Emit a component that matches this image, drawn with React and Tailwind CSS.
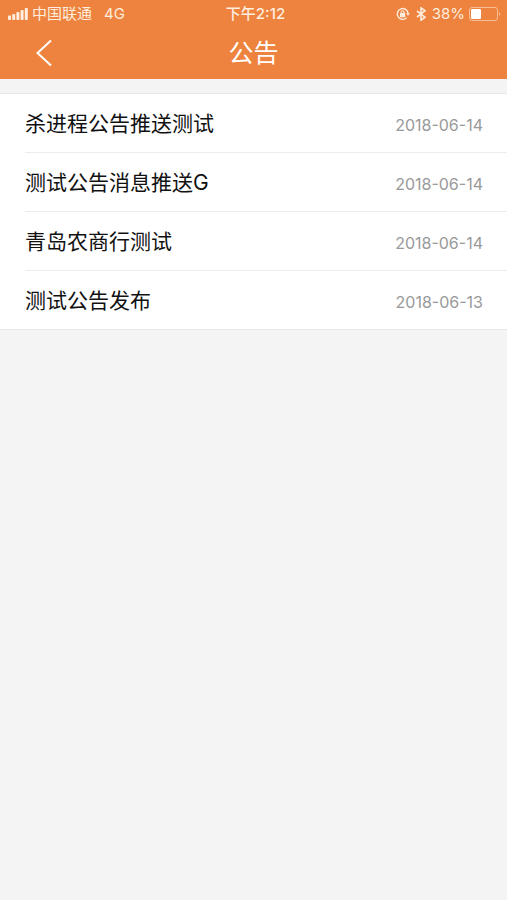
import React from "react";

const notices = [
  { id: 1, title: "杀进程公告推送测试", date: "2018-06-14" },
  { id: 2, title: "测试公告消息推送G", date: "2018-06-14" },
  { id: 3, title: "青岛农商行测试", date: "2018-06-14" },
  { id: 4, title: "测试公告发布", date: "2018-06-13" },
];

const SignalIcon = () => (
  <svg className="w-5 h-3" viewBox="0 0 20 12" fill="currentColor" aria-hidden="true">
    <rect x="0" y="7.5" width="3" height="4.5" rx="0.8" />
    <rect x="4.2" y="6" width="3" height="6" rx="0.8" />
    <rect x="8.4" y="4" width="3" height="8" rx="0.8" />
    <rect x="12.6" y="2" width="3" height="10" rx="0.8" />
    <rect x="16.8" y="0" width="3" height="12" rx="0.8" />
  </svg>
);

const RotationLockIcon = () => (
  <svg className="w-[14px] h-[14px]" viewBox="0 0 14 14" fill="none" aria-hidden="true">
    <path d="M10.7 10.6A5.4 5.4 0 1 1 12.1 6.4" stroke="currentColor" strokeWidth="1.4" />
    <path d="M10 6.2h4l-2 2.6z" fill="currentColor" />
    <rect x="4" y="6" width="5.2" height="4.2" rx="0.5" fill="currentColor" />
    <path d="M5.1 6.4V5.2a1.5 1.5 0 0 1 3 0v1.2" stroke="currentColor" strokeWidth="1.1" />
  </svg>
);

const BluetoothIcon = () => (
  <svg className="w-[10px] h-[14px]" viewBox="0 0 10 14" fill="none" aria-hidden="true">
    <path d="M1 4l8 6.2L5 13.2V.8l4 3L1 10" stroke="currentColor" strokeWidth="1.6" />
  </svg>
);

const BatteryIcon = () => (
  <svg className="w-8 h-[14px]" viewBox="0 0 32 14" fill="none" aria-hidden="true">
    <rect x="0.5" y="0.5" width="28" height="13" rx="2.5" stroke="currentColor" opacity="0.55" />
    <rect x="2" y="2" width="10" height="10" rx="1" fill="white" />
    <path d="M30 5v4c1.6-.6 1.6-3.4 0-4z" fill="currentColor" opacity="0.55" />
  </svg>
);

const StatusBar = () => (
  <div className="grid grid-cols-[1fr_auto_1fr] items-center h-7 pl-2 pr-1 text-[15px] text-[#ffeddf]">
    <div className="flex items-center">
      <SignalIcon />
      <span className="ml-1">中国联通</span>
      <span className="ml-3">4G</span>
    </div>
    <span className="font-medium">下午2:12</span>
    <div className="flex items-center justify-end pr-0.5">
      <RotationLockIcon />
      <span className="ml-1.5">
        <BluetoothIcon />
      </span>
      <span className="ml-1.5 mr-1">38%</span>
      <BatteryIcon />
    </div>
  </div>
);

const NavBar = () => (
  <div className="grid grid-cols-[1fr_auto_1fr] items-center h-[51px] px-8 pb-0.5 text-white">
    <button type="button" aria-label="返回" className="justify-self-start p-1">
      <svg className="w-4 h-7" viewBox="0 0 16 28" fill="none" aria-hidden="true">
        <path d="M15 1.5L1.5 14 15 26.5" stroke="currentColor" strokeWidth="2" />
      </svg>
    </button>
    <h1 className="text-[25px] leading-8">公告</h1>
  </div>
);

const NoticeRow = ({ notice }) => (
  <li className="border-b border-[#ececec] last:border-b-0">
    <a href={`#notice-${notice.id}`} className="flex items-center justify-between h-[58px] pt-0.5 pr-6">
      <span className="text-[21px] text-[#111111]">{notice.title}</span>
      <time dateTime={notice.date} className="pt-0.5 text-base text-[#999999]">
        {notice.date}
      </time>
    </a>
  </li>
);

const App = () => {
  return (
    <div className="min-h-screen bg-[#f4f4f4] font-[Inter,'Noto_Sans_CJK_SC',sans-serif]">
      <header className="bg-[#ed833e]">
        <StatusBar />
        <NavBar />
      </header>

      {/* Notice list */}
      <main className="pt-3.5">
        <ul className="pl-[25px] bg-white border-y border-[#e8e8e8]">
          {notices.map((notice) => (
            <NoticeRow key={notice.id} notice={notice} />
          ))}
        </ul>
      </main>
    </div>
  );
};

export default App;
